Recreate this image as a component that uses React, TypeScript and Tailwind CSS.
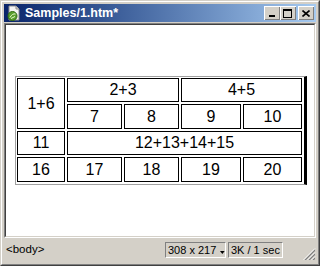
const cells = [
  { t: "1+6", c: "col-start-1 row-start-1 row-span-2" },
  { t: "2+3", c: "col-start-2 col-span-2 row-start-1" },
  { t: "4+5", c: "col-start-4 col-span-2 row-start-1" },
  { t: "7", c: "col-start-2 row-start-2" },
  { t: "8", c: "col-start-3 row-start-2" },
  { t: "9", c: "col-start-4 row-start-2" },
  { t: "10", c: "col-start-5 row-start-2" },
  { t: "11", c: "col-start-1 row-start-3" },
  { t: "12+13+14+15", c: "col-start-2 col-span-4 row-start-3" },
  { t: "16", c: "col-start-1 row-start-4" },
  { t: "17", c: "col-start-2 row-start-4" },
  { t: "18", c: "col-start-3 row-start-4" },
  { t: "19", c: "col-start-4 row-start-4" },
  { t: "20", c: "col-start-5 row-start-4" },
];

const TitleButton = ({ children, className }: { children: React.ReactNode; className?: string }) => (
  <div className={"w-[16px] h-[14px] border-t border-l border-white border-r-[#404040] border-b-[#404040] bg-[#d4d0c8] " + (className ?? "")}>
    <div className="w-full h-full border-r border-b border-[#808080] flex items-center justify-center">{children}</div>
  </div>
);

const DocIcon = () => (
  <svg width="16" height="16" viewBox="0 0 16 16">
    <path d="M3 1h7l3 3v11H3z" fill="#f4f4f4" stroke="#8c8c8c" />
    <path d="M10 1v3h3" fill="#d8d8d8" stroke="#8c8c8c" />
    <circle cx="6.5" cy="11" r="4.5" fill="#5aa02c" stroke="#2f6a12" />
    <path d="M4 12.5c1.5-3 3.5-4 5.5-3.5M5 13.5c1.5-1 2.5-1 4-2" stroke="#e8f8d0" strokeWidth="1" fill="none" />
  </svg>
);

export default function App() {
  return (
    <div className="w-[320px] h-[266px] border border-t-[#d4d0c8] border-l-[#d4d0c8] border-r-[#404040] border-b-[#404040] bg-[#d4d0c8] font-['Liberation_Sans',Arial,sans-serif]">
      <div className="w-full h-full border border-t-white border-l-white border-r-[#808080] border-b-[#808080] p-[2px] flex flex-col">
        <div className="h-[18px] bg-gradient-to-r from-[#0a246a] to-[#a6caf0] flex items-center pl-[2px] pr-[2px]">
          <DocIcon />
          <span className="ml-[3px] text-white font-bold text-[12.5px] leading-none">Samples/1.htm*</span>
          <div className="flex-1" />
          <TitleButton>
            <div className="w-[6px] h-[2px] bg-black mt-[6px] -ml-[1px]" />
          </TitleButton>
          <TitleButton>
            <div className="w-[9px] h-[9px] border border-black border-t-2 -ml-[1px]" />
          </TitleButton>
          <TitleButton className="ml-[2px]">
            <svg width="8" height="7" viewBox="0 0 8 7" className="-ml-[1px]">
              <path d="M0.5 0.5l7 6M7.5 0.5l-7 6" stroke="black" strokeWidth="1.6" />
            </svg>
          </TitleButton>
        </div>
        <div className="mt-[1px] border border-t-[#808080] border-l-[#808080] border-r-white border-b-white">
          <div className="border border-t-[#404040] border-l-[#404040] border-r-[#d4d0c8] border-b-[#d4d0c8]">
            <div className="h-[211px] bg-white pl-[9px] pt-[51px]">
              <div className="w-[292px] border-l border-t border-b border-[#a0a0a0] border-r-[3px] border-r-black pl-[1px] pt-[1px] pb-[2px] pr-[2px]">
                <div className="grid grid-cols-[48px_55px_55px_60px_59px] grid-rows-[24px_25px_24px_25px] gap-[2px] text-[16px] text-black">
                  {cells.map((cell) => (
                    <div key={cell.t} className={"border border-black flex items-center justify-center leading-none " + cell.c}>
                      {cell.t}
                    </div>
                  ))}
                </div>
              </div>
            </div>
          </div>
        </div>
        <div className="flex-1 flex items-center text-[11.5px] text-black leading-none whitespace-nowrap">
          <span className="ml-[2px]">&lt;body&gt;</span>
          <div className="flex-1" />
          <div className="h-[16px] w-[61px] border border-t-[#808080] border-l-[#808080] border-r-white border-b-white flex items-center pl-[2px] text-[11px]">
            308 x 217
            <svg width="5" height="3" viewBox="0 0 5 3" className="ml-[4px] mt-[5px]">
              <path d="M0 0h5L2.5 3z" fill="black" />
            </svg>
          </div>
          <div className="ml-[2px] h-[16px] w-[55px] border border-t-[#808080] border-l-[#808080] border-r-white border-b-white flex items-center pl-[2px] text-[11px]">
            3K / 1 sec
          </div>
          <svg width="13" height="13" viewBox="0 0 13 13" className="block shrink-0 self-end mb-[1px] ml-[20px]">
            <polygon points="12,1 12,3 3,12 1,12" fill="#808080" />
            <polygon points="12,5 12,7 7,12 5,12" fill="#808080" />
            <polygon points="12,9 12,11 11,12 9,12" fill="#808080" />
            <line x1="12" y1="0.5" x2="0.5" y2="12" stroke="white" strokeWidth="1" />
            <line x1="12" y1="4.5" x2="4.5" y2="12" stroke="white" strokeWidth="1" />
            <line x1="12" y1="8.5" x2="8.5" y2="12" stroke="white" strokeWidth="1" />
          </svg>
        </div>
      </div>
    </div>
  );
}
